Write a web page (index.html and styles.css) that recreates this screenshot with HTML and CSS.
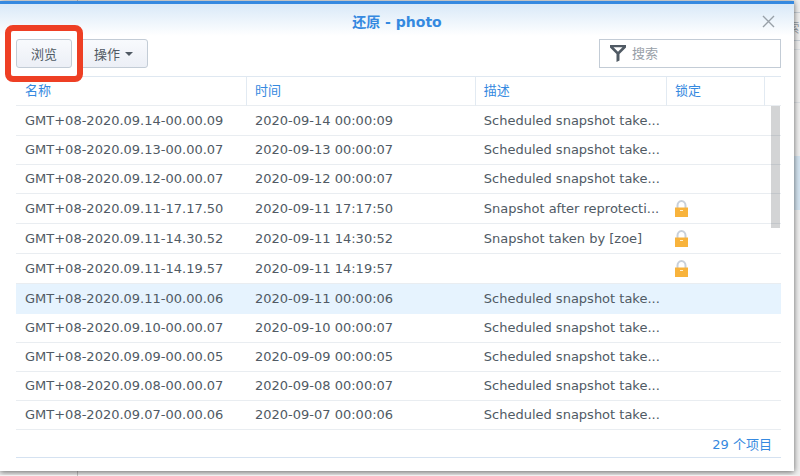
FILE: index.html
```html
<!DOCTYPE html>
<html lang="zh-CN">
  <head>
    <meta charset="utf-8">
    <title>还原 - photo</title>
    <meta name="viewport" content="width=device-width, initial-scale=1">
    <link rel="stylesheet" href="styles.css">
  </head>

  <body>

    <!-- part of the page that stays visible behind the window -->
    <div class="back-divider"></div>
    <div class="backdrop">
      <div class="back-search">索</div>
      <div class="back-line"></div>
      <div class="back-selected"></div>
    </div>

    <div class="window">
      <header class="title-bar">
        <h1>还原 - photo</h1>
        <button class="close-button" aria-label="关闭">
          <svg width="13" height="13" viewBox="0 0 13 13">
            <path d="M1 1L12 12M12 1L1 12" stroke="#98a0a8" stroke-width="1.4" fill="none"/>
          </svg>
        </button>
      </header>

      <div class="toolbar">
        <div class="highlight">
          <button class="tool-button browse">浏览</button>
        </div>
        <button class="tool-button action">操作 <span class="arrow"></span></button>

        <label class="search">
          <svg width="16" height="17" viewBox="0 0 16 17">
            <path d="M0 0H16V2.5L9.5 9V15.5L6.5 17V9L0 2.5ZM3.5 2.2L8 6.8L12.500 2.2Z" fill="#505a64" fill-rule="evenodd"/>
          </svg>
          <input type="text" placeholder="搜索" aria-label="搜索">
        </label>
      </div>

      <div class="grid">
        <table>
          <colgroup>
            <col class="col-name">
            <col class="col-time">
            <col class="col-desc">
            <col class="col-lock">
            <col class="col-end">
          </colgroup>
          <thead>
            <tr>
              <th>名称</th>
              <th>时间</th>
              <th>描述</th>
              <th>锁定</th>
              <th></th>
            </tr>
          </thead>
          <tbody>
            <tr>
              <td>GMT+08-2020.09.14-00.00.09</td>
              <td>2020-09-14 00:00:09</td>
              <td>Scheduled snapshot take...</td>
              <td></td>
              <td></td>
            </tr>
            <tr>
              <td>GMT+08-2020.09.13-00.00.07</td>
              <td>2020-09-13 00:00:07</td>
              <td>Scheduled snapshot take...</td>
              <td></td>
              <td></td>
            </tr>
            <tr>
              <td>GMT+08-2020.09.12-00.00.07</td>
              <td>2020-09-12 00:00:07</td>
              <td>Scheduled snapshot take...</td>
              <td></td>
              <td></td>
            </tr>
            <tr class="locked">
              <td>GMT+08-2020.09.11-17.17.50</td>
              <td>2020-09-11 17:17:50</td>
              <td>Snapshot after reprotecti...</td>
              <td><svg class="lock" width="13" height="17" viewBox="0 0 13 17"><path d="M2.5 8V5.5a4 4.5 0 0 1 8 0V8" fill="none" stroke="#c8d0da" stroke-width="2"/><path d="M0 7.5H13V17H0Z" fill="#f8b33c"/><path d="M5 10H8V11H5Z" fill="#fff0cf"/></svg></td>
              <td></td>
            </tr>
            <tr class="locked">
              <td>GMT+08-2020.09.11-14.30.52</td>
              <td>2020-09-11 14:30:52</td>
              <td>Snapshot taken by [zoe]</td>
              <td><svg class="lock" width="13" height="17" viewBox="0 0 13 17"><path d="M2.5 8V5.5a4 4.5 0 0 1 8 0V8" fill="none" stroke="#c8d0da" stroke-width="2"/><path d="M0 7.5H13V17H0Z" fill="#f8b33c"/><path d="M5 10H8V11H5Z" fill="#fff0cf"/></svg></td>
              <td></td>
            </tr>
            <tr class="locked">
              <td>GMT+08-2020.09.11-14.19.57</td>
              <td>2020-09-11 14:19:57</td>
              <td></td>
              <td><svg class="lock" width="13" height="17" viewBox="0 0 13 17"><path d="M2.5 8V5.5a4 4.5 0 0 1 8 0V8" fill="none" stroke="#c8d0da" stroke-width="2"/><path d="M0 7.5H13V17H0Z" fill="#f8b33c"/><path d="M5 10H8V11H5Z" fill="#fff0cf"/></svg></td>
              <td></td>
            </tr>
            <tr class="selected">
              <td>GMT+08-2020.09.11-00.00.06</td>
              <td>2020-09-11 00:00:06</td>
              <td>Scheduled snapshot take...</td>
              <td></td>
              <td></td>
            </tr>
            <tr>
              <td>GMT+08-2020.09.10-00.00.07</td>
              <td>2020-09-10 00:00:07</td>
              <td>Scheduled snapshot take...</td>
              <td></td>
              <td></td>
            </tr>
            <tr>
              <td>GMT+08-2020.09.09-00.00.05</td>
              <td>2020-09-09 00:00:05</td>
              <td>Scheduled snapshot take...</td>
              <td></td>
              <td></td>
            </tr>
            <tr>
              <td>GMT+08-2020.09.08-00.00.07</td>
              <td>2020-09-08 00:00:07</td>
              <td>Scheduled snapshot take...</td>
              <td></td>
              <td></td>
            </tr>
            <tr>
              <td>GMT+08-2020.09.07-00.00.06</td>
              <td>2020-09-07 00:00:06</td>
              <td>Scheduled snapshot take...</td>
              <td></td>
              <td></td>
            </tr>
          </tbody>
        </table>
        <div class="scrollbar"></div>
      </div>

      <footer class="status">29 个项目</footer>
    </div>

  </body>
</html>
```
FILE: styles.css
```css
* {
  box-sizing: border-box;
}

body {
  margin: 0;
  padding: 1px 6px 4px 0;
  background-color: #f0f0f0;
  font-family: "DejaVu Sans", "Noto Sans CJK SC", sans-serif;
  font-size: 13px;
  color: #505a64;
  overflow: hidden;
}

button,
input {
  font: inherit;
  color: inherit;
}

.back-divider {
  position: absolute;
  top: 0;
  left: 77px;
  width: 1px;
  height: 100%;
  background-color: #c0c0c0;
}

.backdrop {
  position: absolute;
  top: 0;
  right: 0;
  width: 14px;
  height: 100%;
  overflow: hidden;
}

.back-search {
  display: flex;
  justify-content: center;
  align-items: center;
  height: 29px;
  margin-top: 12px;
  border: 1px solid #c8d0d8;
  border-width: 1px 0;
  color: #98a0a8;
}

.back-line {
  height: 54px;
  margin-top: 8px;
  border: 1px solid #dde1e5;
  border-width: 1px 0;
}

.back-selected {
  height: 54px;
  margin-top: 53px;
  background-color: #d5e5f2;
}

.window {
  position: relative;
  padding: 0 13px 13px 16px;
  border-top: 3px solid #3589e0;
  background: linear-gradient(#d9e9f8, white 32px) white;
  box-shadow: 0 1px 6px rgba(0, 0, 0, 0.6);
}

.title-bar {
  display: flex;
  justify-content: center;
  align-items: center;
  height: 35px;
}

.title-bar h1 {
  flex: 1;
  margin: 0;
  padding-left: 16px;
  font-size: 14px;
  line-height: 20px;
  text-align: center;
  color: #3589e0;
}

.close-button {
  display: flex;
  padding: 0;
  margin-right: 6px;
  border: none;
  background: none;
  cursor: pointer;
}

.toolbar {
  display: flex;
  align-items: center;
  height: 29px;
}

.tool-button {
  height: 29px;
  padding: 0 14px;
  border: 1px solid #c3ccd6;
  border-radius: 3px;
  background: linear-gradient(#f8fafd, #eceff6);
  cursor: pointer;
}

/* red frame round the browse button */
.highlight {
  position: relative;
  z-index: 1;
  margin: 0 -4px 0 -11px;
  padding: 8px 5px;
  border: 6px solid #ee3f24;
  border-radius: 8px;
  background-color: white;
}

.browse {
  display: block;
}

.action {
  display: flex;
  align-items: center;
  gap: 5px;
}

.arrow {
  border: 4px solid transparent;
  border-top-color: #505a64;
  border-bottom: none;
}

.search {
  display: flex;
  align-items: center;
  gap: 6px;
  width: 182px;
  height: 29px;
  margin-left: auto;
  padding: 0 10px;
  border: 1px solid #c3ccd6;
  background-color: white;
}

.search input {
  flex: 1;
  min-width: 0;
  padding: 0;
  border: none;
  outline: none;
  background: none;
}

.search input::placeholder {
  color: #98a0a8;
}

.grid {
  position: relative;
  margin-top: 8px;
}

table {
  width: 100%;
  table-layout: fixed;
  border-collapse: separate;
  border-spacing: 0;
}

.col-name {
  width: 30.2%;
}

.col-time {
  width: 29.9%;
}

.col-lock {
  width: 98px;
}

.col-end {
  width: 16px;
}

th,
td {
  height: 29px;
  padding: 0 0 0 8px;
  border-bottom: 1px solid #e9edf1;
  font-weight: normal;
  line-height: 20px;
  text-align: left;
  white-space: nowrap;
}

th:first-child,
td:first-child {
  padding-left: 9px;
}

th {
  height: 30px;
  border-top: 1px solid #dfe8f1;
  border-right: 1px solid #e2eaf2;
  color: #3589e0;
}

th:last-child {
  border-right: none;
}

tbody tr:first-child td,
.locked td,
.selected td {
  height: 30px;
}

.selected td {
  border-bottom-color: #e6f3fe;
  background-color: #e6f3fe;
}

.lock {
  display: block;
}

.scrollbar {
  position: absolute;
  top: 30px;
  right: 1px;
  width: 9px;
  height: 122px;
  background-color: rgba(80, 84, 88, 0.25);
}

.status {
  display: flex;
  justify-content: flex-end;
  align-items: center;
  height: 28px;
  padding-right: 9px;
  border-bottom: 1px solid #d5e2f1;
  color: #3589e0;
}
```
